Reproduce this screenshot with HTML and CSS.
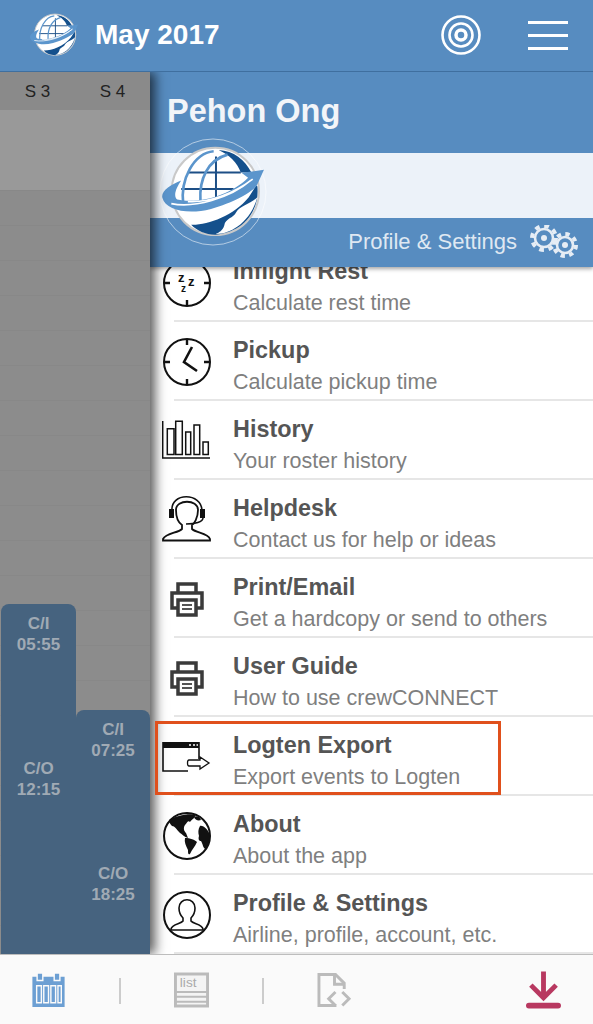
FILE: index.html
```html
<!DOCTYPE html>
<html lang="en">

<head>
  <meta charset="UTF-8">
  <meta name="viewport" content="width=device-width, initial-scale=1">
  <title>crewCONNECT menu</title>
  <link rel="stylesheet" href="styles.css">
</head>

<body>
<svg class="defs" width="0" height="0">
  <symbol id="globe" viewBox="28 50 320 278">
    <circle cx="195" cy="187" r="132" fill="#fff" stroke="#c9c9c9" stroke-width="6"/>
    <path d="M205 62C250 64 285 92 304 130H272C262 100 236 76 205 62Z" fill="#14508c"/>
    <path d="M322 172C330 245 280 312 195 318C165 318 140 306 122 288C170 290 250 262 296 205L318 170Z" fill="#14508c"/>
    <path d="M322 205C300 225 270 230 258 250C250 268 225 268 222 290C218 305 205 312 196 316C235 318 300 285 322 205Z" fill="#fff"/>
    <path d="M197 82V205M112 130H272M92 180H250" fill="none" stroke="#1d4f86" stroke-width="6"/>
    <path d="M98 228C88 150 130 72 190 66M150 215C146 150 172 92 232 76" fill="none" stroke="#5b95cc" stroke-width="8"/>
    <path d="M342 122L274 131L294 146C240 200 145 226 80 212C66 200 78 174 92 154C60 166 30 186 35 206C45 244 112 258 182 240C250 222 305 190 320 170Z" fill="#5b95cc"/>
    <path d="M62 224C130 238 240 208 302 154M112 218C180 222 252 192 308 150" fill="none" stroke="#fff" stroke-width="5"/>
  </symbol>
  <symbol id="printer" viewBox="0 0 36 36">
    <path d="M9 11V3H27V11M8 27H3V12H33V27H28" fill="none" stroke="#3a3a3a" stroke-width="3.500"/>
    <path d="M9 19H27V34H9Z" fill="#fff" stroke="#3a3a3a" stroke-width="3.500"/>
    <path d="M13 24H23M13 28H23" stroke="#555" stroke-width="2"/>
  </symbol>
</svg>

<header class="topbar">
  <svg class="top-logo"><use href="#globe"/></svg>
  <h1 class="month">May 2017</h1>
  <svg class="target" viewBox="0 0 40 40">
    <circle cx="20" cy="20" r="18.500" fill="none" stroke="#fff" stroke-width="2.600"/>
    <circle cx="20" cy="20" r="11.500" fill="none" stroke="#fff" stroke-width="2.600"/>
    <circle cx="20" cy="20" r="5" fill="none" stroke="#fff" stroke-width="3.500"/>
  </svg>
  <div class="burger"><span></span><span></span><span></span></div>
</header>

<main class="stage">
  <section class="roster">
    <div class="days"><span>S 3</span><span>S 4</span></div>
    <div class="today"></div>
    <div class="grid">
      <div class="col col-a">
        <div class="duty">
          <p class="duty-in">C/I<br>05:55</p>
          <p class="duty-out">C/O<br>12:15</p>
        </div>
      </div>
      <div class="col col-b">
        <div class="duty">
          <p class="duty-in">C/I<br>07:25</p>
          <p class="duty-out">C/O<br>18:25</p>
        </div>
      </div>
    </div>
  </section>

  <section class="drawer">
    <div class="drawer-head">
      <h2 class="name">Pehon Ong</h2>
      <div class="strip"></div>
      <div class="settings-bar">
        <span>Profile &amp; Settings</span>
        <svg class="gears" viewBox="0 0 50 34">
          <g fill="none" stroke="#e6edf5">
            <circle cx="15" cy="13" r="9" stroke-width="2.600"/>
            <circle cx="15" cy="13" r="12" stroke-width="4" stroke-dasharray="4.700 4.700"/>
            <circle cx="36" cy="20" r="8" stroke-width="2.600"/>
            <circle cx="36" cy="20" r="11" stroke-width="4" stroke-dasharray="4.300 4.340"/>
          </g>
          <circle cx="15" cy="13" r="3" fill="#e6edf5"/>
          <circle cx="36" cy="20" r="3" fill="#e6edf5"/>
        </svg>
      </div>
      <svg class="head-logo" viewBox="0 0 110 110">
        <circle cx="55" cy="55" r="53" fill="none" stroke="#fff" stroke-opacity=".55" stroke-width="1"/>
        <use href="#globe" x="2" y="9" width="106" height="92"/>
      </svg>
    </div>

    <ul class="menu">
      <li class="item first">
        <svg class="ico" viewBox="0 0 50 50">
          <circle cx="25" cy="25" r="23" fill="none" stroke="#111" stroke-width="2"/>
          <path d="M25 2V8M25 42V48M2 25H8M42 25H48" stroke="#111" stroke-width="2.400"/>
          <text x="16" y="24" class="zz">z</text><text x="26" y="28" class="zz">z</text><text x="19" y="34" class="zz small">z</text>
        </svg>
        <div><h3>Inflight Rest</h3><p>Calculate rest time</p></div>
      </li>
      <li class="item">
        <svg class="ico" viewBox="0 0 50 50">
          <circle cx="25" cy="25" r="23" fill="none" stroke="#111" stroke-width="2"/>
          <path d="M25 2V8M25 42V48M2 25H8M42 25H48" stroke="#111" stroke-width="2.400"/>
          <path d="M30 10L22 25L35 34" fill="none" stroke="#111" stroke-width="2.600"/>
        </svg>
        <div><h3>Pickup</h3><p>Calculate pickup time</p></div>
      </li>
      <li class="item">
        <svg class="ico" viewBox="0 0 50 50">
          <path d="M.7 5V42H48" fill="none" stroke="#111" stroke-width="1.500"/>
          <path d="M5.300 12.800H12V38.500H5.300ZM13.700 5.200H20.300V38.500H13.700ZM23.700 16H28.700V38.500H23.700ZM32 9H37.700V38.500H32ZM41 26H46.300V38.500H41Z" fill="none" stroke="#111" stroke-width="1.500"/>
        </svg>
        <div><h3>History</h3><p>Your roster history</p></div>
      </li>
      <li class="item">
        <svg class="ico" viewBox="0 0 50 50">
          <path d="M10 16C8 -3 40 -3 40 16" fill="none" stroke="#111" stroke-width="1.600"/>
          <path d="M14 15C14 4 36 4 36 15C36 23 32 29 30 30V34C34 38 46 38 48 44V45.500H1V44C4 38 16 38 20 34V30C17 28 14 23 14 15Z" fill="#fff" stroke="#111" stroke-width="1.800"/>
          <path d="M7 14H12V23H7ZM38 14H43V23H38Z" fill="#111"/>
          <path d="M41 23C41 27 33 29 24 29" fill="none" stroke="#111" stroke-width="1.500"/>
        </svg>
        <div><h3>Helpdesk</h3><p>Contact us for help or ideas</p></div>
      </li>
      <li class="item">
        <svg class="ico print"><use href="#printer"/></svg>
        <div><h3>Print/Email</h3><p>Get a hardcopy or send to others</p></div>
      </li>
      <li class="item">
        <svg class="ico print"><use href="#printer"/></svg>
        <div><h3>User Guide</h3><p>How to use crewCONNECT</p></div>
      </li>
      <li class="item marked">
        <svg class="ico" viewBox="0 0 50 34">
          <path d="M1 2H37V8H1Z" fill="#111"/>
          <path d="M1 2V31H26M37 2V19" fill="none" stroke="#111" stroke-width="1.600"/>
          <path d="M27 5H29M31 5H33M34.500 5H36" stroke="#fff" stroke-width="1.500"/>
          <path d="M27 20H38V17L47 23L38 29V26H27C25 26 25 20 27 20Z" fill="#fff" stroke="#111" stroke-width="1.300"/>
        </svg>
        <div><h3>Logten Export</h3><p>Export events to Logten</p></div>
        <span class="marker"></span>
      </li>
      <li class="item">
        <svg class="ico" viewBox="0 0 50 50">
          <circle cx="25" cy="25" r="23" fill="#fff" stroke="#111" stroke-width="2"/>
          <path d="M7 9C14 5 26 2 34 4C32 8 30 8 28 11C26 9 25 12 23 14C21 17 22 20 24 22L26 27C22 26 20 23 18 22C14 18 13 15 10 15C8 13 7 11 7 9Z" fill="#111"/>
          <path d="M23 27C28 27 33 29 35 31C33 36 30 38 28 43C26 44 26 42 26 39C24 35 22 31 23 27Z" fill="#111"/>
          <path d="M38 15C41 14 47 19 48 25C48 30 46 34 44 38C41 38 41 33 39 30C37 30 36 28 37 25C36 22 36 18 38 15Z" fill="#111"/>
          <path d="M32 6C35 4 38 6 39 9C36 10 33 9 32 6Z" fill="#111"/>
        </svg>
        <div><h3>About</h3><p>About the app</p></div>
      </li>
      <li class="item">
        <svg class="ico" viewBox="0 0 50 50">
          <circle cx="25" cy="25" r="23" fill="none" stroke="#111" stroke-width="2"/>
          <path d="M17 18C17 7 33 7 33 18C33 23 30 27 29 28V31C31 34 40 34 41 39V40H9V39C10 34 19 34 21 31V28C20 27 17 23 17 18Z" fill="none" stroke="#111" stroke-width="1.600"/>
        </svg>
        <div><h3>Profile &amp; Settings</h3><p>Airline, profile, account, etc.</p></div>
      </li>
    </ul>
  </section>
</main>

<nav class="tabs">
  <svg class="tab-ico" viewBox="0 0 36 38">
    <path d="M1 5H35V37H1Z" fill="#6c9fd3"/>
    <path d="M6 1H12V9H6ZM24 1H30V9H24Z" fill="#6c9fd3" stroke="#fafafa" stroke-width="1.500"/>
    <path d="M5.500 14.500H10.500V32.500H5.500ZM13 14.500H18V32.500H13ZM20.500 14.500H25.500V32.500H20.500ZM28 14.500H31.500V32.500H28Z" fill="none" stroke="#fafafa" stroke-width="1.500"/>
  </svg>
  <i class="tab-sep"></i>
  <svg class="tab-ico" viewBox="0 0 36 36">
    <path d="M1.500 1.500H34.500V34.500H1.500Z" fill="#f4f4f4" stroke="#bbb" stroke-width="3"/>
    <text x="6" y="15" class="list-word">list</text>
    <path d="M2 20H34M2 25H34M2 30H34" stroke="#bbb" stroke-width="2"/>
  </svg>
  <i class="tab-sep"></i>
  <svg class="tab-ico" viewBox="0 0 36 36">
    <path d="M20 34H2V2H19L28 11V17" fill="none" stroke="#bbb" stroke-width="3"/>
    <path d="M18 2V12H28" fill="none" stroke="#bbb" stroke-width="3"/>
    <path d="M19 20L12 27L19 34M26 20L33 27L26 34" fill="none" stroke="#bbb" stroke-width="3"/>
  </svg>
  <svg class="tab-ico download" viewBox="0 0 36 40">
    <path d="M18 1V25M5 15L18 28L31 15" fill="none" stroke="#b83860" stroke-width="5"/>
    <path d="M3 36H33" stroke="#b83860" stroke-width="6" stroke-linecap="round"/>
  </svg>
</nav>
</body>

</html>
```

FILE: styles.css
```css
* {
    box-sizing: border-box;
}

html,
body {
    margin: 0;
    height: 1024px;
    overflow: hidden;
    font-family: "Liberation Sans", Arial, sans-serif;
}

.defs {
    position: absolute;
}

/* top bar */
.topbar {
    position: relative;
    z-index: 5;
    display: flex;
    align-items: center;
    height: 72px;
    padding: 0 25px 1px 29px;
    background-color: #578cc0;
    border-bottom: 1px solid #3f6f9f;
    color: #fff;
}

.top-logo {
    width: 50px;
    height: 46px;
}

.month {
    margin: 0 0 0 16px;
    font-size: 28px;
    font-weight: bold;
    flex: 1;
}

.target {
    width: 40px;
    height: 40px;
    margin-right: 47px;
}

.burger {
    display: flex;
    flex-direction: column;
    gap: 10px;
    width: 40px;
}

.burger span {
    height: 3px;
    background-color: #fff;
}

/* page under the bar */
.stage {
    display: flex;
    height: 882px;
}

.roster {
    position: relative;
    z-index: 3;
    width: 150px;
    display: flex;
    flex-direction: column;
    background-color: #8c8c8c;
    box-shadow: 5px 0 11px rgba(0, 0, 0, 0.65);
}

.days {
    display: flex;
    height: 38px;
    padding-top: 10px;
    font-size: 17px;
    color: #222;
    background-color: #8a8a8a;
}

.days span {
    width: 75px;
    text-align: center;
}

.today {
    height: 80px;
    background-color: #999;
}

.grid {
    flex: 1;
    display: flex;
    padding-left: 1px;
    background-image: linear-gradient(#888 1px, transparent 1px);
    background-size: 100% 35px;
}

.col {
    display: flex;
    flex-direction: column;
}

.col-a {
    width: 75px;
    padding-top: 414px;
}

.col-b {
    width: 74px;
    padding-top: 520px;
}

.duty {
    flex: 1;
    border-radius: 8px 8px 0 0;
    background-color: #46637f;
    color: #a0aab4;
    font-size: 17px;
    font-weight: bold;
    line-height: 21px;
    text-align: center;
}

.duty p {
    margin: 0;
}

.duty-in {
    padding-top: 9px;
}

.col-a .duty-out {
    padding-top: 103px;
}

.col-b .duty-out {
    padding-top: 102px;
}

/* drawer */
.drawer {
    flex: 1;
    display: flex;
    flex-direction: column;
}

.drawer-head {
    position: relative;
    z-index: 2;
    height: 195px;
    background-color: #578cc0;
    box-shadow: 0 2px 4px rgba(0, 0, 0, 0.35);
}

.name {
    height: 81px;
    margin: 0;
    padding: 21px 0 0 17px;
    font-size: 32.500px;
    font-weight: bold;
    color: #f2f5f9;
}

.strip {
    height: 65px;
    background-color: #ecf2f9;
}

.settings-bar {
    display: flex;
    align-items: center;
    justify-content: flex-end;
    gap: 12px;
    height: 49px;
    padding: 0 14px 2px 0;
    font-size: 22px;
    color: #dfe8f2;
}

.gears {
    width: 50px;
    height: 34px;
}

.head-logo {
    position: absolute;
    left: 8px;
    top: 65px;
    width: 110px;
    height: 110px;
}

.menu {
    flex: 1;
    margin: 0;
    padding: 0;
    list-style: none;
    overflow: hidden;
    background-color: #fff;
}

.item {
    position: relative;
    display: flex;
    align-items: center;
    height: 79px;
    padding-left: 12px;
}

.item::after {
    content: "";
    position: absolute;
    left: 24px;
    right: 0;
    bottom: 0;
    height: 2px;
    background-color: #e6e6e6;
}

.item div {
    padding-top: 10px;
}

.first {
    margin-top: -24px;
}

.ico {
    flex: none;
    width: 50px;
    height: 50px;
    margin-right: 21px;
}

.print {
    padding: 7px;
}

.zz {
    font-size: 13px;
    font-weight: bold;
    fill: #111;
}

.small {
    font-size: 10px;
}

.item h3 {
    margin: 0 0 7px;
    font-size: 23.400px;
    line-height: 25px;
    color: #555;
}

.item p {
    margin: 0;
    font-size: 21.500px;
    line-height: 25px;
    color: #7f7f7f;
}

.marker {
    position: absolute;
    z-index: 4;
    left: 5px;
    top: 4px;
    width: 346px;
    height: 74px;
    border: 3px solid #e0501c;
}

/* bottom tabs */
.tabs {
    position: relative;
    z-index: 5;
    display: flex;
    align-items: center;
    height: 70px;
    padding: 0 32px 0 31px;
    background-color: #fafafa;
    border-top: 1px solid #bdbdbd;
}

.tab-ico {
    width: 35px;
    height: 36px;
}

.tab-sep {
    width: 2px;
    height: 26px;
    margin: 2px 53px 0;
    background-color: #ccc;
}

.list-word {
    font-size: 14px;
    fill: #aaa;
}

.download {
    height: 40px;
    margin-left: auto;
}
```
